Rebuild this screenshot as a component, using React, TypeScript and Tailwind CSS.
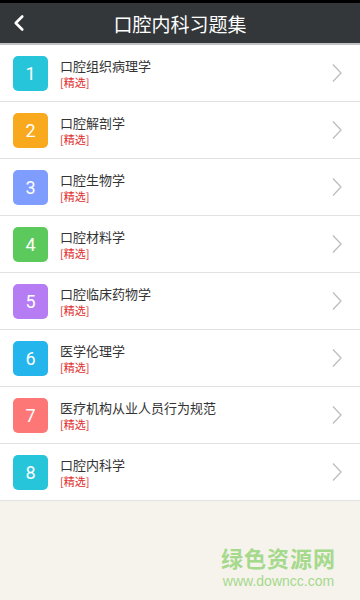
import { ChevronLeft } from 'lucide-react';

const items = [
  { n: 1, title: '口腔组织病理学', color: 'bg-[#26c5d9]' },
  { n: 2, title: '口腔解剖学', color: 'bg-[#f8a91d]' },
  { n: 3, title: '口腔生物学', color: 'bg-[#7f9dfe]' },
  { n: 4, title: '口腔材料学', color: 'bg-[#5cc95c]' },
  { n: 5, title: '口腔临床药物学', color: 'bg-[#b67cf4]' },
  { n: 6, title: '医学伦理学', color: 'bg-[#23b5ec]' },
  { n: 7, title: '医疗机构从业人员行为规范', color: 'bg-[#fd7777]' },
  { n: 8, title: '口腔内科学', color: 'bg-[#26c5d9]' },
];

const Chevron = () => (
  <svg width="12" height="20" viewBox="0 0 12 20" fill="none">
    <path d="M2 1.5 L10 10 L2 18.5" stroke="#bdbdbd" strokeWidth="1.3" strokeLinejoin="miter" />
  </svg>
);

const App = () => {
  return (
    <div
      className="flex h-[600px] w-[360px] flex-col overflow-hidden bg-[#f6f3ed]"
      style={{ fontFamily: '"Noto Sans CJK SC", Roboto, "Liberation Sans", sans-serif' }}
    >
      {/* header */}
      <div className="h-[3px] bg-black" />
      <div className="relative flex h-[40px] items-center justify-center bg-[#33373a]">
        <ChevronLeft className="absolute left-[6px] top-[7px]" size={26} color="#ffffff" strokeWidth={2.4} />
        <span className="text-[19px] leading-none text-white">口腔内科习题集</span>
      </div>
      <div className="h-[2px] bg-[#bfc3c4]" />

      {/* list */}
      <div className="flex flex-col bg-white">
        {items.map((it) => (
          <div key={it.n} className="flex h-[57px] items-center border-b border-[#e2e2e2] pl-[13px] pr-[17px]">
            <div
              className={`${it.color} flex h-[35px] w-[35px] items-center justify-center rounded-[5px] text-[18px] text-white`}
              style={{ fontFamily: 'Roboto, "Liberation Sans", sans-serif' }}
            >
              {it.n}
            </div>
            <div className="ml-[12px] flex flex-1 flex-col">
              <span className="text-[13px] leading-[18px] text-[#333333]">{it.title}</span>
              <span className="text-[11px] leading-[14px] text-[#e02b2b]">[精选]</span>
            </div>
            <Chevron />
          </div>
        ))}
      </div>

      {/* watermark */}
      <div className="flex flex-1 flex-col items-end justify-end pb-[11px] pr-[24px]">
        <div className="flex flex-col items-center">
          <span className="text-[22px] font-bold leading-[32px] tracking-[1px] text-[#a5d98c]">绿色资源网</span>
          <span
            className="text-[14px] leading-[16px] text-[#a5d98c]"
            style={{ fontFamily: '"Liberation Sans", Arial, sans-serif' }}
          >
            www.downcc.com
          </span>
        </div>
      </div>
    </div>
  );
};

export default App;
